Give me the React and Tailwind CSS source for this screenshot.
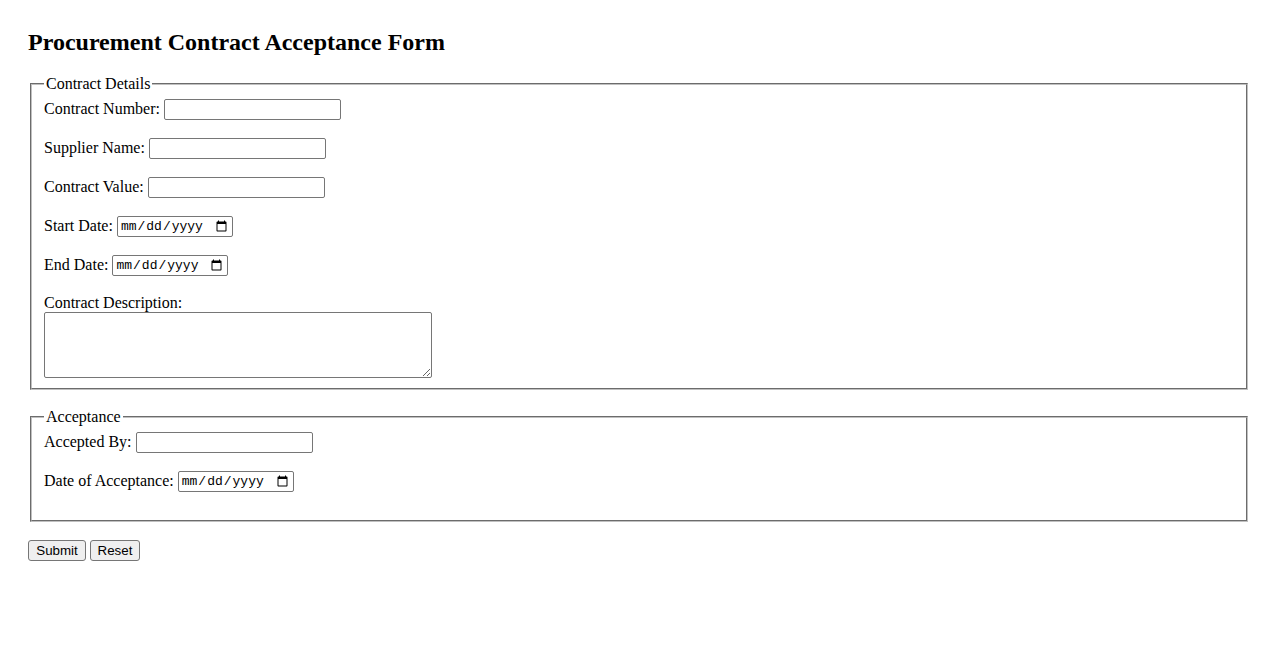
import React from 'react'

const textInput =
    'h-[21px] w-[177px] rounded-[2px] border border-[#767676] bg-white px-[2px] font-["Liberation_Sans",Arial,sans-serif] text-[13.33px] text-black outline-none'
const dateInput =
    'h-[21px] w-[116px] rounded-[2px] border border-[#767676] bg-white px-[2px] font-["Liberation_Mono",monospace] text-[13px] text-black outline-none'
const button =
    'h-[21px] rounded-[3px] border border-[#767676] bg-[#efefef] font-["Liberation_Sans",Arial,sans-serif] text-[13.33px] leading-none text-black'

const Row = ({ label, id, type = 'text' }) => (
    <div className="mb-[18px] flex h-[21px] items-center gap-[4px]">
        <label htmlFor={id} className="pb-[2px] leading-[18px]">{label}</label>
        <input id={id} type={type} className={type === 'date' ? dateInput : textInput} />
    </div>
)

export default function App() {
    return (
        <div className="min-h-screen bg-white px-[28px] pt-[28px] font-['Liberation_Serif','Times_New_Roman',serif] text-[16px] text-black">
            <h1 className="mb-[19px] text-[24px] font-bold leading-[28px]">
                Procurement Contract Acceptance Form
            </h1>

            <form onSubmit={(e) => e.preventDefault()}>
                {/* Contract Details */}
                <fieldset className="mx-[2px] border-2 border-[#c0c0c0] px-[12px] pt-[6px] pb-[10px] [border-style:groove]">
                    <legend className="px-[2px] leading-[18px]">Contract Details</legend>
                    <Row label="Contract Number:" id="contractNumber" />
                    <Row label="Supplier Name:" id="supplierName" />
                    <Row label="Contract Value:" id="contractValue" />
                    <Row label="Start Date:" id="startDate" type="date" />
                    <Row label="End Date:" id="endDate" type="date" />
                    <label htmlFor="description" className="block leading-[18px]">Contract Description:</label>
                    <textarea
                        id="description"
                        className="block h-[66px] w-[388px] rounded-[2px] border border-[#767676] bg-white p-[2px] font-['Liberation_Mono',monospace] text-[13px] outline-none"
                    />
                </fieldset>

                {/* Acceptance */}
                <fieldset className="mx-[2px] mt-[18px] border-2 border-[#c0c0c0] px-[12px] pt-[6px] pb-[10px] [border-style:groove]">
                    <legend className="px-[2px] leading-[18px]">Acceptance</legend>
                    <Row label="Accepted By:" id="acceptedBy" />
                    <Row label="Date of Acceptance:" id="acceptanceDate" type="date" />
                </fieldset>

                <div className="mt-[18px] flex gap-[4px]">
                    <button type="submit" className={`${button} w-[58px]`}>Submit</button>
                    <button type="reset" className={`${button} w-[50px]`}>Reset</button>
                </div>
            </form>
        </div>
    )
}
